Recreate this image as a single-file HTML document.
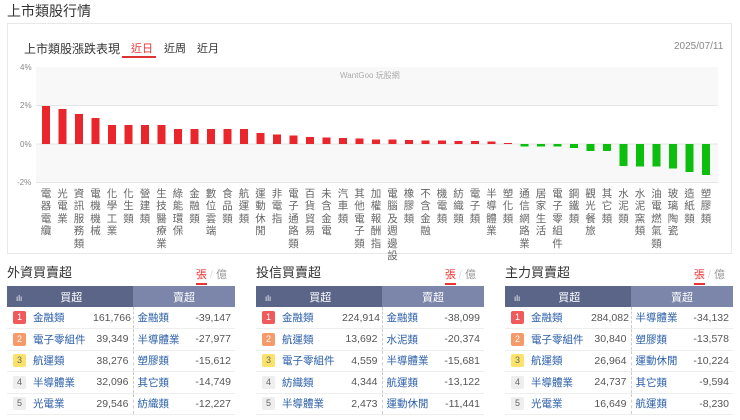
<!DOCTYPE html>
<html><head><meta charset="utf-8"><style>
*{margin:0;padding:0;box-sizing:border-box}
body{width:740px;height:420px;background:#fff;font-family:"Liberation Sans","Noto Sans CJK TC",sans-serif;position:relative;overflow:hidden;color:#333}
.abs{position:absolute}
.h1{left:7px;top:1px;font-size:14px;color:#333}
.card{left:7px;top:23px;width:725px;height:231px;border:1px solid #e8e8e8}
.lbl{position:absolute;top:188px;width:12px;font-size:10.5px;line-height:12.4px;color:#666;text-align:center;word-break:break-all}
.panel{position:absolute;top:262px;width:228px}
.pt{font-size:13px;color:#333;height:24px}
.unit{position:absolute;right:8px;top:4px;font-size:11px;color:#999}
.unit b{font-weight:normal;color:#e33;border-bottom:2px solid #e33;padding-bottom:2px}
table{border-collapse:collapse;width:228px;font-size:10.5px;table-layout:fixed}
th{height:21px;color:#fff;font-weight:normal;font-size:11px}
td{height:21.5px;border-bottom:1px solid #eee;white-space:nowrap;overflow:hidden}
.n{color:#2a5ea8}
.r{text-align:right;padding-right:4px;color:#555}
.rk{padding-left:6px}
.rk span{display:inline-block;width:13px;height:13px;font-size:9px;line-height:13px;text-align:center;color:#fff;border-radius:2px}
.s{border-left:1px dashed #ccc;padding-left:4px}
</style></head><body>
<div class="abs h1">上市類股行情</div>
<div class="abs card"></div>
<div class="abs" style="left:24px;top:40px;font-size:12px;color:#333">上市類股漲跌表現</div>
<div class="abs" style="left:131px;top:40px;font-size:11px;color:#e33">近日</div>
<div class="abs" style="left:122px;top:56px;width:34px;height:2px;background:#d33"></div>
<div class="abs" style="left:164px;top:40px;font-size:11px;color:#333">近周</div>
<div class="abs" style="left:197px;top:40px;font-size:11px;color:#333">近月</div>
<div class="abs" style="left:674px;top:41px;font-size:10px;color:#888">2025/07/11</div>
<svg class="abs" style="left:0;top:0" width="740" height="200">
<rect x="36" y="67" width="682" height="38.5" fill="#f8f8f8"/>
<rect x="36" y="144" width="682" height="38.5" fill="#f8f8f8"/>
<g stroke="#e6e6e6"><line x1="36" y1="105.5" x2="718" y2="105.5"/><line x1="36" y1="144" x2="718" y2="144"/><line x1="36" y1="182.5" x2="718" y2="182.5"/></g>
<g font-size="8" fill="#888" font-family="Liberation Sans"><text x="20" y="70">4%</text><text x="20" y="108">2%</text><text x="20" y="147">0%</text><text x="17" y="185">-2%</text></g>
<text x="340" y="78" font-size="8" fill="#aaa" font-family="Liberation Sans,Noto Sans CJK TC">WantGoo 玩股網</text>
<g fill="#e8262b">
<rect x="42" y="106" width="8" height="38"/><rect x="58.5" y="109" width="8" height="35"/><rect x="75" y="114" width="8" height="30"/><rect x="91.5" y="118" width="8" height="26"/><rect x="108" y="125" width="8" height="19"/><rect x="124.5" y="125" width="8" height="19"/><rect x="141" y="125" width="8" height="19"/><rect x="157.5" y="125" width="8" height="19"/><rect x="174" y="129" width="8" height="15"/><rect x="190.5" y="129" width="8" height="15"/><rect x="207" y="129" width="8" height="15"/><rect x="223.5" y="129" width="8" height="15"/><rect x="240" y="129" width="8" height="15"/><rect x="256.5" y="133" width="8" height="11"/><rect x="273" y="134.5" width="8" height="9.5"/><rect x="289.5" y="135.5" width="8" height="8.5"/><rect x="306" y="137" width="8" height="7"/><rect x="322.5" y="137.5" width="8" height="6.5"/><rect x="339" y="138" width="8" height="6"/><rect x="355.5" y="138.5" width="8" height="5.5"/><rect x="372" y="139.5" width="8" height="4.5"/><rect x="388.5" y="139.5" width="8" height="4.5"/><rect x="405" y="140" width="8" height="4"/><rect x="421.5" y="140.5" width="8" height="3.5"/><rect x="438" y="140.5" width="8" height="3.5"/><rect x="454.5" y="141" width="8" height="3"/><rect x="471" y="141" width="8" height="3"/><rect x="487.5" y="141.5" width="8" height="2.5"/><rect x="504" y="143" width="8" height="1"/>
</g>
<g fill="#0cbf0c">
<rect x="520.5" y="144" width="8" height="2.5"/><rect x="537" y="144" width="8" height="2.5"/><rect x="553.5" y="144" width="8" height="2.5"/><rect x="570" y="144" width="8" height="4"/><rect x="586.5" y="144" width="8" height="7"/><rect x="603" y="144" width="8" height="7"/><rect x="619.5" y="144" width="8" height="22"/><rect x="636" y="144" width="8" height="22.5"/><rect x="652.5" y="144" width="8" height="22.5"/><rect x="669" y="144" width="8" height="24.5"/><rect x="685.5" y="144" width="8" height="28"/><rect x="702" y="144" width="8" height="31"/>
</g>
</svg>
<div class="lbl" style="left:40px">電器電纜</div><div class="lbl" style="left:56.5px">光電業</div><div class="lbl" style="left:73px">資訊服務類</div><div class="lbl" style="left:89.5px">電機機械</div><div class="lbl" style="left:106px">化學工業</div><div class="lbl" style="left:122.5px">化生類</div><div class="lbl" style="left:139px">營建類</div><div class="lbl" style="left:155.5px">生技醫療業</div><div class="lbl" style="left:172px">綠能環保</div><div class="lbl" style="left:188.5px">金融類</div><div class="lbl" style="left:205px">數位雲端</div><div class="lbl" style="left:221.5px">食品類</div><div class="lbl" style="left:238px">航運類</div><div class="lbl" style="left:254.5px">運動休閒</div><div class="lbl" style="left:271px">非電指</div><div class="lbl" style="left:287.5px">電子通路類</div><div class="lbl" style="left:304px">百貨貿易</div><div class="lbl" style="left:320.5px">未含金電</div><div class="lbl" style="left:337px">汽車類</div><div class="lbl" style="left:353.5px">其他電子類</div><div class="lbl" style="left:370px">加權報酬指</div><div class="lbl" style="left:386.5px">電腦及週邊設</div><div class="lbl" style="left:403px">橡膠類</div><div class="lbl" style="left:419.5px">不含金融</div><div class="lbl" style="left:436px">機電類</div><div class="lbl" style="left:452.5px">紡織類</div><div class="lbl" style="left:469px">電子類</div><div class="lbl" style="left:485.5px">半導體業</div><div class="lbl" style="left:502px">塑化類</div><div class="lbl" style="left:518.5px">通信網路業</div><div class="lbl" style="left:535px">居家生活</div><div class="lbl" style="left:551.5px">電子零組件</div><div class="lbl" style="left:568px">鋼鐵類</div><div class="lbl" style="left:584.5px">觀光餐旅</div><div class="lbl" style="left:601px">其它類</div><div class="lbl" style="left:617.5px">水泥類</div><div class="lbl" style="left:634px">水泥窯類</div><div class="lbl" style="left:650.5px">油電燃氣類</div><div class="lbl" style="left:667px">玻璃陶瓷</div><div class="lbl" style="left:683.5px">造紙類</div><div class="lbl" style="left:700px">塑膠類</div>

<div class="panel" style="left:7px"><div class="pt">外資買賣超</div><div class="unit"><b>張</b> <span style="color:#ddd">/</span> 億</div>
<table><colgroup><col style="width:26px"><col style="width:60px"><col style="width:40px"><col style="width:56px"><col style="width:46px"></colgroup><tr><th style="background:#5a6587;text-align:left;padding-left:9px" colspan="3"><span style="font-size:8px">ılı</span><span style="margin-left:38px">買超</span></th><th style="background:#7b86aa" colspan="2">賣超</th></tr>
<tr><td class="rk"><span style="background:#f05a5a">1</span></td><td class="n">金融類</td><td class="r">161,766</td><td class="n s">金融類</td><td class="r">-39,147</td></tr>
<tr><td class="rk"><span style="background:#f79a6a">2</span></td><td class="n">電子零組件</td><td class="r">39,349</td><td class="n s">半導體業</td><td class="r">-27,977</td></tr>
<tr><td class="rk"><span style="background:#fbe26a;color:#666">3</span></td><td class="n">航運類</td><td class="r">38,276</td><td class="n s">塑膠類</td><td class="r">-15,612</td></tr>
<tr><td class="rk"><span style="background:#eee;color:#666">4</span></td><td class="n">半導體業</td><td class="r">32,096</td><td class="n s">其它類</td><td class="r">-14,749</td></tr>
<tr><td class="rk"><span style="background:#eee;color:#666">5</span></td><td class="n">光電業</td><td class="r">29,546</td><td class="n s">紡織類</td><td class="r">-12,227</td></tr></table></div>

<div class="panel" style="left:256px"><div class="pt">投信買賣超</div><div class="unit"><b>張</b> <span style="color:#ddd">/</span> 億</div>
<table><colgroup><col style="width:26px"><col style="width:60px"><col style="width:40px"><col style="width:56px"><col style="width:46px"></colgroup><tr><th style="background:#5a6587;text-align:left;padding-left:9px" colspan="3"><span style="font-size:8px">ılı</span><span style="margin-left:38px">買超</span></th><th style="background:#7b86aa" colspan="2">賣超</th></tr>
<tr><td class="rk"><span style="background:#f05a5a">1</span></td><td class="n">金融類</td><td class="r">224,914</td><td class="n s">金融類</td><td class="r">-38,099</td></tr>
<tr><td class="rk"><span style="background:#f79a6a">2</span></td><td class="n">航運類</td><td class="r">13,692</td><td class="n s">水泥類</td><td class="r">-20,374</td></tr>
<tr><td class="rk"><span style="background:#fbe26a;color:#666">3</span></td><td class="n">電子零組件</td><td class="r">4,559</td><td class="n s">半導體業</td><td class="r">-15,681</td></tr>
<tr><td class="rk"><span style="background:#eee;color:#666">4</span></td><td class="n">紡織類</td><td class="r">4,344</td><td class="n s">航運類</td><td class="r">-13,122</td></tr>
<tr><td class="rk"><span style="background:#eee;color:#666">5</span></td><td class="n">半導體業</td><td class="r">2,473</td><td class="n s">運動休閒</td><td class="r">-11,441</td></tr></table></div>

<div class="panel" style="left:505px"><div class="pt">主力買賣超</div><div class="unit"><b>張</b> <span style="color:#ddd">/</span> 億</div>
<table><colgroup><col style="width:26px"><col style="width:60px"><col style="width:40px"><col style="width:56px"><col style="width:46px"></colgroup><tr><th style="background:#5a6587;text-align:left;padding-left:9px" colspan="3"><span style="font-size:8px">ılı</span><span style="margin-left:38px">買超</span></th><th style="background:#7b86aa" colspan="2">賣超</th></tr>
<tr><td class="rk"><span style="background:#f05a5a">1</span></td><td class="n">金融類</td><td class="r">284,082</td><td class="n s">半導體業</td><td class="r">-34,132</td></tr>
<tr><td class="rk"><span style="background:#f79a6a">2</span></td><td class="n">電子零組件</td><td class="r">30,840</td><td class="n s">塑膠類</td><td class="r">-13,578</td></tr>
<tr><td class="rk"><span style="background:#fbe26a;color:#666">3</span></td><td class="n">航運類</td><td class="r">26,964</td><td class="n s">運動休閒</td><td class="r">-10,224</td></tr>
<tr><td class="rk"><span style="background:#eee;color:#666">4</span></td><td class="n">半導體業</td><td class="r">24,737</td><td class="n s">其它類</td><td class="r">-9,594</td></tr>
<tr><td class="rk"><span style="background:#eee;color:#666">5</span></td><td class="n">光電業</td><td class="r">16,649</td><td class="n s">航運類</td><td class="r">-8,230</td></tr></table></div>
</body></html>
